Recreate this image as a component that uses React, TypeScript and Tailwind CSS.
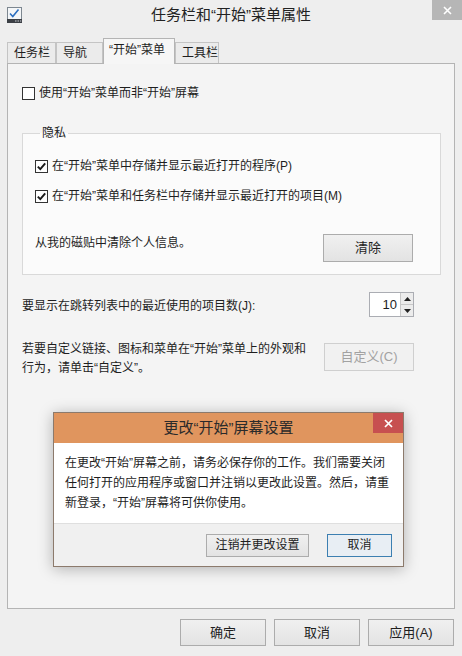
import React from 'react';

const CheckBox: React.FC<{ checked?: boolean }> = ({ checked }) => (
  <svg width="13" height="13" viewBox="0 0 13 13" className="shrink-0">
    <rect x="0.5" y="0.5" width="12" height="12" fill="#fff" stroke="#333" />
    {checked && <path d="M2.8 6.6 L5.3 9.2 L10.2 3.4" stroke="#1a1a1a" strokeWidth="1.9" fill="none" />}
  </svg>
);

const Button: React.FC<{ label: string; className?: string; disabled?: boolean; active?: boolean }> = ({
  label,
  className = '',
  disabled,
  active,
}) => (
  <button
    className={`flex items-center justify-center text-[12px] border ${
      disabled
        ? 'border-[#cfcfcf] bg-[#f1f1f1] text-[#a2a2a2]'
        : active
        ? 'border-[#3c7fb1] bg-[#e8eef4] text-[#1e1e1e]'
        : 'border-[#acacac] bg-gradient-to-b from-[#f0f0f0] to-[#e3e3e3] text-[#1e1e1e]'
    } ${className}`}
  >
    {label}
  </button>
);

const AppIcon = () => (
  <svg width="16" height="17" viewBox="0 0 16 17">
    <rect x="0.5" y="0.5" width="14" height="12" fill="#f4f6f8" stroke="#7d8790" />
    <path d="M3 6.5 L5.8 9.5 L11.5 2.5" stroke="#2c6fc0" strokeWidth="1.6" fill="none" />
    <rect x="0" y="12" width="15" height="4" fill="#3b3f45" />
    <rect x="8" y="13.5" width="1.5" height="1" fill="#c9ced4" />
    <rect x="10.5" y="13.5" width="1.5" height="1" fill="#c9ced4" />
    <rect x="13" y="13.5" width="1.2" height="1" fill="#c9ced4" />
  </svg>
);

const tabs = [
  { label: '任务栏', w: 'w-[49px]' },
  { label: '导航', w: 'w-[47px]' },
  { label: '“开始”菜单', w: 'w-[72px]', selected: true },
  { label: '工具栏', w: 'w-[44px]' },
];

const App: React.FC = () => {
  return (
    <div className="relative w-[462px] h-[656px] overflow-hidden bg-[#eeeeee] text-[#1e1e1e] font-['Liberation_Sans','Noto_Sans_CJK_SC',sans-serif]">
      {/* title bar */}
      <div className="flex h-[30px] items-start">
        <div className="w-[30px] h-[30px] flex items-center pl-[7px] pt-[1px]">
          <AppIcon />
        </div>
        <div className="flex-1 h-[30px] flex items-center justify-center text-[15px] text-[#222]">
          任务栏和“开始”菜单属性
        </div>
        <div className="w-[30px] h-[20px] bg-[#b6b6b6] flex items-center justify-center">
          <svg width="9" height="9" viewBox="0 0 9 9">
            <path d="M1 1 L8 8 M8 1 L1 8" stroke="#fff" strokeWidth="1.6" />
          </svg>
        </div>
      </div>

      {/* tabs */}
      <div className="flex items-end pl-[7px] pt-[8px]">
        {tabs.map((t) =>
          t.selected ? (
            <div
              key={t.label}
              className={`${t.w} h-[26px] -mb-px relative z-10 border border-b-0 border-[#b4b4b4] bg-[#f6f6f6] pl-[5px] pt-[2px] text-[12px] leading-[18px]`}
            >
              {t.label}
            </div>
          ) : (
            <div
              key={t.label}
              className={`${t.w} h-[21px] border border-b-0 border-[#c4c4c4] bg-[#ebebeb] pl-[6px] text-[12px] leading-[20px]`}
            >
              {t.label}
            </div>
          )
        )}
      </div>

      {/* tab page */}
      <div className="mx-[7px] h-[546px] border border-[#b4b4b4] bg-[#f4f4f4] pl-[14px] text-[12px]">
        <div className="mt-[21px] h-[16px] flex items-center gap-[4px]">
          <CheckBox />
          <span>使用“开始”菜单而非“开始”屏幕</span>
        </div>

        <fieldset className="mt-[24px] mr-[13px] border border-[#d9d9d9] bg-[#fbfbfb] pl-[12px] pb-[12px]">
          <legend className="ml-[5px] px-[2px] leading-[16px]">隐私</legend>
          <div className="mt-[17px] h-[16px] flex items-center gap-[4px]">
            <CheckBox checked />
            <span>在“开始”菜单中存储并显示最近打开的程序(P)</span>
          </div>
          <div className="mt-[14px] h-[16px] flex items-center gap-[4px]">
            <CheckBox checked />
            <span>在“开始”菜单和任务栏中存储并显示最近打开的项目(M)</span>
          </div>
          <div className="mt-[30px] flex items-start justify-between pr-[27px]">
            <span className="mt-[1px] leading-[16px]">从我的磁贴中清除个人信息。</span>
            <Button label="清除" className="w-[90px] h-[28px] text-[13px]" />
          </div>
        </fieldset>

        <div className="mt-[17px] flex items-center justify-between pr-[40px] h-[25px]">
          <span className="pt-[2px]">要显示在跳转列表中的最近使用的项目数(J):</span>
          <div className="w-[45px] h-[25px] border border-[#abadb3] bg-white flex items-stretch">
            <div className="flex-1 flex items-center justify-end pr-[3px] text-[13px]">10</div>
            <div className="w-[13px] flex flex-col border-l border-[#c8c8c8]">
              <div className="flex-1 flex items-center justify-center bg-[#ececec] border-b border-[#c8c8c8]">
                <svg width="7" height="4" viewBox="0 0 7 4">
                  <path d="M0 4 L3.5 0 L7 4 Z" fill="#222" />
                </svg>
              </div>
              <div className="flex-1 flex items-center justify-center bg-[#ececec]">
                <svg width="7" height="4" viewBox="0 0 7 4">
                  <path d="M0 0 L3.5 4 L7 0 Z" fill="#222" />
                </svg>
              </div>
            </div>
          </div>
        </div>

        <div className="mt-[23px] flex items-start justify-between pr-[40px]">
          <p className="leading-[19px]">
            若要自定义链接、图标和菜单在“开始”菜单上的外观和
            <br />
            行为，请单击“自定义”。
          </p>
          <Button label="自定义(C)" disabled className="mt-[3px] w-[90px] h-[28px] text-[13px]" />
        </div>
      </div>

      {/* dialog buttons */}
      <div className="mt-[10px] flex justify-end gap-[8px] pr-[8px]">
        <Button label="确定" className="w-[86px] h-[27px] text-[13px]" />
        <Button label="取消" className="w-[86px] h-[27px] text-[13px]" />
        <Button label="应用(A)" className="w-[86px] h-[27px] text-[13px]" />
      </div>

      {/* confirmation popup */}
      <div className="absolute left-[53px] top-[412px] w-[351px] h-[155px] border border-[#8c7a6c] bg-white shadow-[0_2px_14px_rgba(0,0,0,0.28)] flex flex-col">
        <div className="relative h-[30px] shrink-0 bg-[#e0955e] flex items-center justify-center text-[15px] text-[#2a2a2a]">
          更改“开始”屏幕设置
          <div className="absolute right-0 top-0 w-[30px] h-[20px] bg-[#c75050] flex items-center justify-center">
            <svg width="9" height="9" viewBox="0 0 9 9">
              <path d="M1 1 L8 8 M8 1 L1 8" stroke="#fff" strokeWidth="1.7" />
            </svg>
          </div>
        </div>
        <p className="flex-1 px-[11px] pt-[10px] text-[12px] leading-[20px] whitespace-nowrap">
          在更改“开始”屏幕之前，请务必保存你的工作。我们需要关闭
          <br />
          任何打开的应用程序或窗口并注销以更改此设置。然后，请重
          <br />
          新登录，“开始”屏幕将可供你使用。
        </p>
        <div className="h-[43px] shrink-0 border-t border-[#dfdfdf] bg-[#f0f0f0] flex items-center justify-end gap-[18px] pr-[11px]">
          <Button label="注销并更改设置" className="w-[103px] h-[23px] text-[12px]" />
          <Button label="取消" active className="w-[65px] h-[23px] text-[12px]" />
        </div>
      </div>
    </div>
  );
};

export default App;
